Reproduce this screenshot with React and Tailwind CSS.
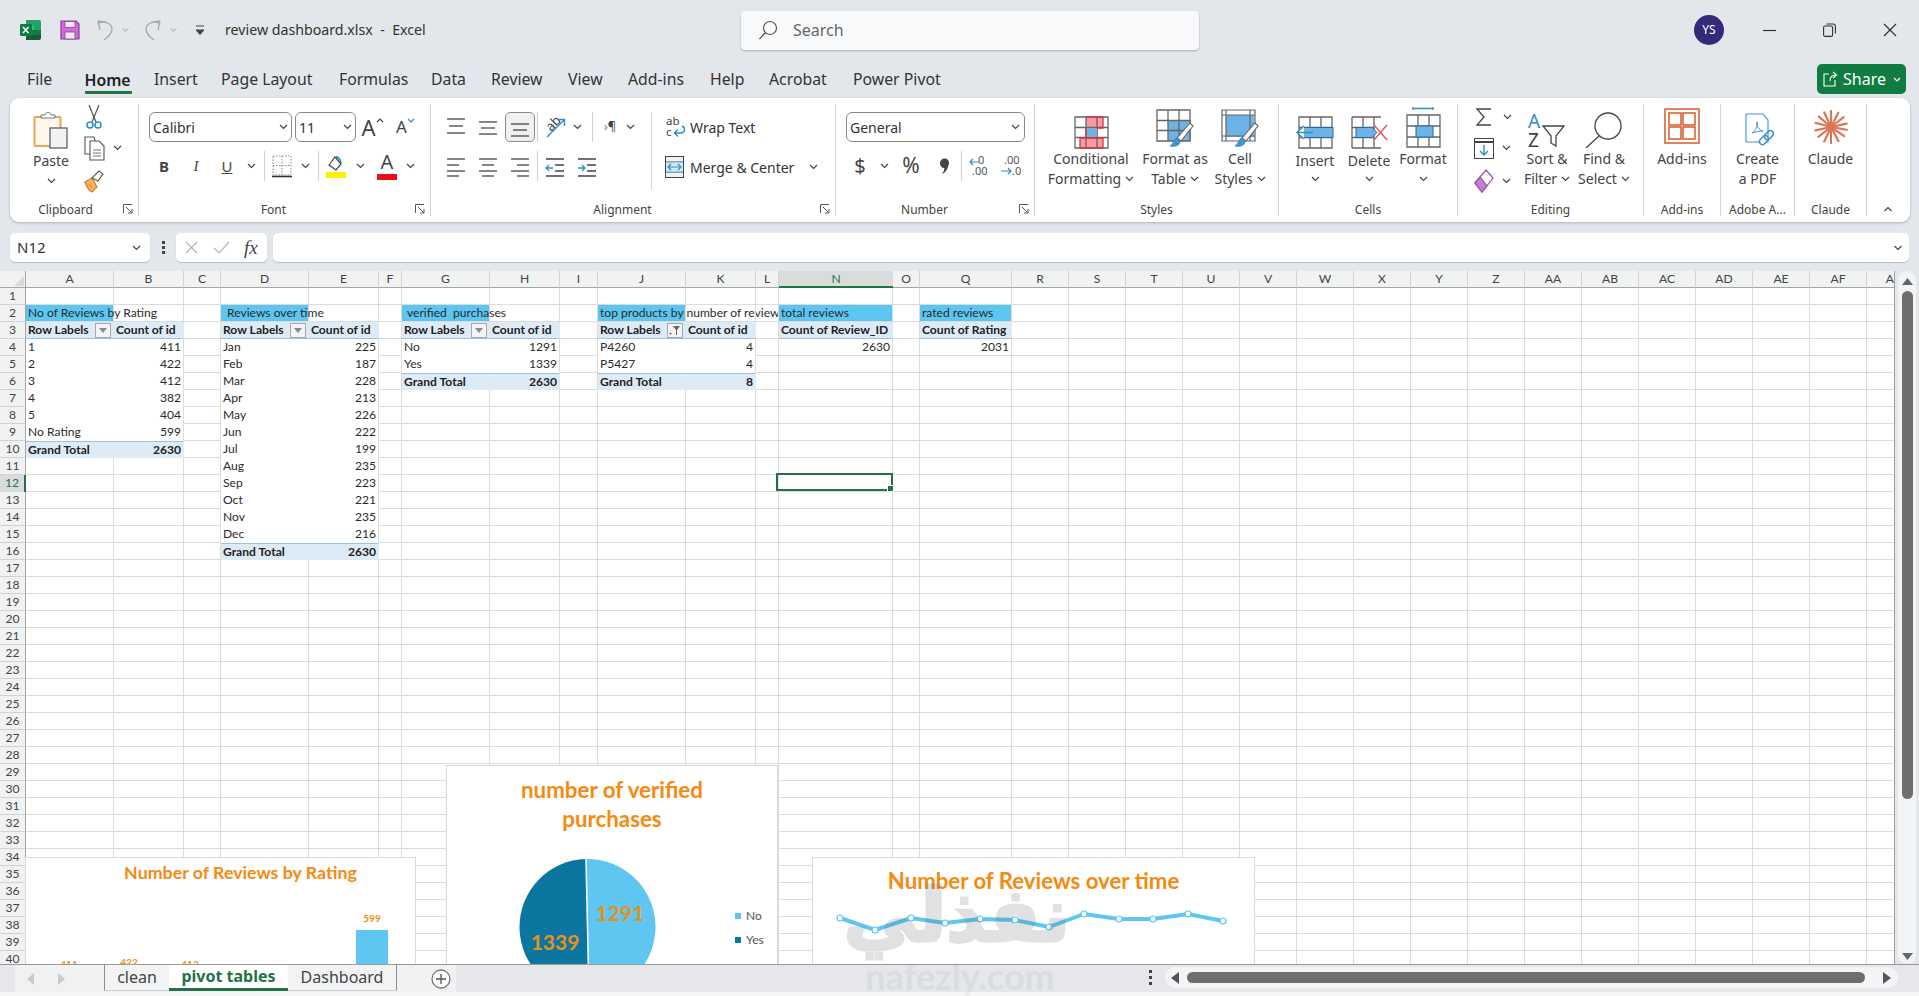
import React from "react";

const Chev = ({ up = false, w = 9 }) => (
  <svg width={w} height="6" viewBox="0 0 9 6" className={up ? "rotate-180" : ""}>
    <path d="M1 1l3.5 3.5L8 1" fill="none" stroke="#444" strokeWidth="1.2" />
  </svg>
);

const Launcher = () => (
  <svg width="10" height="10" viewBox="0 0 10 10" className="absolute right-[5px] top-[0px]">
    <path d="M.5 9V.5H9M3 3l5.5 5.5M5 9h4V5" fill="none" stroke="#555" strokeWidth="1" />
  </svg>
);

const Bars = ({ l, w = 20, h = 22, c = "#444" }) => (
  <svg width={w} height={h} viewBox={`0 0 ${w} ${h}`}>
    {l.map((a, i) => (
      <path key={i} d={`M${a[0]} ${a[2]}H${a[1]}`} stroke={a[3] || c} strokeWidth="1.3" />
    ))}
  </svg>
);

const ExcelIcon = () => (
  <svg width="21" height="20" viewBox="0 0 21 20">
    <path d="M6 0h13a2 2 0 0 1 2 2v3H6z" fill="#21a366" />
    <rect x="6" y="5" width="15" height="5" fill="#33c481" />
    <rect x="13.5" y="5" width="7.5" height="5" fill="#21a366" />
    <rect x="6" y="10" width="15" height="5" fill="#107c41" />
    <path d="M6 15h15v3a2 2 0 0 1-2 2H6z" fill="#185c37" />
    <rect x="0" y="4" width="12" height="12" rx="1.2" fill="#107c41" />
    <path d="M3 7l5.6 6M8.6 7L3 13" stroke="#fff" strokeWidth="1.6" />
  </svg>
);

const SaveIcon = () => (
  <svg width="20" height="20" viewBox="0 0 20 20">
    <path d="M1 1h15l3 3v15H1z" fill="#d36ad9" stroke="#8a3f9c" strokeWidth="1.2" />
    <rect x="5" y="1.5" width="10" height="6" fill="#f6e7f8" stroke="#8a3f9c" strokeWidth=".8" />
    <rect x="5" y="12" width="10" height="7" fill="#f6e7f8" stroke="#8a3f9c" strokeWidth=".8" />
  </svg>
);

const Undo = ({ flip }) => (
  <svg width="19" height="22" viewBox="0 0 19 22" className={flip ? "-scale-x-100" : ""}>
    <path d="M4 11l-2-9M2 2l9 1.5M3 4c5-2 13 0 13 6 0 5-4 8-8 11" fill="none" stroke="#a6a8ab" strokeWidth="1.3" />
  </svg>
);

const Paste = () => (
  <svg width="36" height="38" viewBox="0 0 36 38">
    <rect x="1.5" y="6" width="26" height="29" rx="1" fill="#fdf7ec" stroke="#e6a655" strokeWidth="2" />
    <path d="M8 7V4h4c.5-3.500 5.500-3.500 6 0h4v3H8z" fill="#fff" stroke="#777" strokeWidth="1" />
    <rect x="17" y="17" width="17" height="20" fill="#f2f2f2" stroke="#555" strokeWidth="1.2" />
  </svg>
);

const Cut = () => (
  <svg width="16" height="26" viewBox="0 0 16 26">
    <path d="M3 1l7 17M13 1L6 18" stroke="#555" strokeWidth="1.2" />
    <circle cx="4" cy="21" r="3" fill="#fff" stroke="#2e8fc4" strokeWidth="1.6" />
    <circle cx="12" cy="21" r="3" fill="#fff" stroke="#2e8fc4" strokeWidth="1.6" />
  </svg>
);

const Copy = () => (
  <svg width="21" height="25" viewBox="0 0 21 25">
    <path d="M1 1h9l1 3v14H1z" fill="#fff" stroke="#555" strokeWidth="1.1" />
    <path d="M6 5h9l5 5v14H6z" fill="#fff" stroke="#555" strokeWidth="1.1" />
    <path d="M9 14h8M9 17h8M9 20h8" stroke="#777" strokeWidth="1" />
  </svg>
);

const Painter = () => (
  <svg width="21" height="24" viewBox="0 0 21 24">
    <path d="M1 13l7-4 5 9-5 5C5 22 2 17 1 13z" fill="#f3b264" stroke="#d97c1e" strokeWidth="1.2" />
    <path d="M8 9l7-7 4 3-5 7z" fill="#fff" stroke="#555" strokeWidth="1.1" />
    <path d="M5 15l3 4" stroke="#d97c1e" strokeWidth="1" />
  </svg>
);

const GrowA = ({ small }) => (
  <div className="flex items-start text-[#444]">
    <span className={small ? "text-[17px] leading-[24px]" : "text-[22px] leading-[26px]"}>A</span>
    <svg width="8" height="6" viewBox="0 0 8 6" className={"mt-[3px] " + (small ? "" : "rotate-180")}>
      <path d="M1 1l3 3 3-3" fill="none" stroke={small ? "#2e8fc4" : "#444"} strokeWidth="1.2" />
    </svg>
  </div>
);

const Borders = () => (
  <svg width="20" height="23" viewBox="0 0 20 23">
    <path d="M1 1h18v19H1zM10 1v19M1 10.500h18" fill="none" stroke="#888" strokeWidth="1" strokeDasharray="1.500 1.500" />
    <path d="M0 21.500h20" stroke="#333" strokeWidth="1.6" />
  </svg>
);

const Fill = () => (
  <svg width="20" height="25" viewBox="0 0 20 25">
    <path d="M3 11l6-8 6 7-5 6z" fill="#fff" stroke="#444" strokeWidth="1.2" />
    <path d="M9 4c2-2 5 0 6 5" fill="none" stroke="#1c79a8" strokeWidth="1.6" />
    <rect x="0" y="18" width="20" height="6" fill="#fdf100" />
  </svg>
);

const FontCol = () => (
  <div className="flex flex-col items-center">
    <span className="text-[20px] leading-[20px] text-[#444]">A</span>
    <div className="w-[20px] h-[6px] bg-[#e9101a] mt-[2px]" />
  </div>
);

const Orient = () => (
  <svg width="22" height="24" viewBox="0 0 22 24">
    <text x="4" y="14" fontSize="13" fill="#444" transform="rotate(-45 9 12)" fontFamily="Noto Sans">ab</text>
    <path d="M3 22L20 5M14 4.500h6.500V11" fill="none" stroke="#2e8fc4" strokeWidth="1.400" />
  </svg>
);

const WrapIcon = () => (
  <svg width="22" height="24" viewBox="0 0 22 24">
    <text x="1" y="10" fontSize="11.500" fill="#444" fontFamily="Noto Sans">ab</text>
    <text x="1" y="21" fontSize="11.500" fill="#444" fontFamily="Noto Sans">c</text>
    <path d="M17 11c4 2 3 7-1 7h-6M13 14.500L9.500 18l3.500 3.500" fill="none" stroke="#2e8fc4" strokeWidth="1.400" />
  </svg>
);

const MergeIcon = () => (
  <svg width="20" height="22" viewBox="0 0 20 22">
    <rect x=".5" y=".5" width="18" height="21" fill="#eaf5fb" stroke="#444" />
    <path d="M.5 6h18M.5 16h18" stroke="#444" />
    <rect x="1" y="6.500" width="17" height="9" fill="#cfe8f6" />
    <path d="M3 11h13M6 8l-3 3 3 3M13 8l3 3-3 3" fill="none" stroke="#2e8fc4" strokeWidth="1.200" />
  </svg>
);

const Dec = ({ inc }) => (
  <svg width="22" height="22" viewBox="0 0 22 22" fontFamily="Noto Sans" fontSize="11" fill="#555">
    {inc ? (
      <>
        <text x="10" y="9">0</text>
        <text x="4" y="20">.00</text>
        <path d="M2 6h9M5 3L2 6l3 3" fill="none" stroke="#2e8fc4" strokeWidth="1.200" transform="translate(0,1)" />
      </>
    ) : (
      <>
        <text x="4" y="9">.00</text>
        <text x="12" y="20">.0</text>
        <path d="M1 16h10M8 13l3 3-3 3" fill="none" stroke="#2e8fc4" strokeWidth="1.200" />
      </>
    )}
  </svg>
);

const GridBase = ({ children, w = 35, h = 33 }) => (
  <svg width={w} height={h} viewBox="0 0 35 33">{children}</svg>
);
const lines35 = "M1 1h33v31H1zM1 11.500h33M1 21.500h33M12 1v31M23 1v31";

const CondFmt = () => (
  <GridBase>
    <rect x="12" y="1" width="17" height="11" fill="#f79aa2" />
    <rect x="12" y="11" width="11" height="11" fill="#6eb2e6" />
    <rect x="6" y="22" width="23" height="10" fill="#f79aa2" />
    <path d={lines35} fill="none" stroke="#666" strokeWidth="1.300" />
    <path d="M12 1h17M29 1v11H23v10M12 12v10M6 22v10M6 22h23v10H6" fill="none" stroke="#d8333f" strokeWidth="1.300" />
    <rect x="13" y="12" width="10" height="9" fill="#6eb2e6" />
  </GridBase>
);

const Brush = ({ x = 0, y = 0 }) => (
  <g transform={`translate(${x} ${y})`}>
    <path d="M20 0l3 3-12 15-4-3z" fill="#fff" stroke="#666" strokeWidth="1.100" />
    <path d="M6 15l4 3c0 5-6 6-10 5 3-1 3-5 6-8z" fill="#3f97d3" stroke="#2a7fb8" strokeWidth=".8" />
  </g>
);

const FmtTable = () => (
  <svg width="38" height="40" viewBox="0 0 38 40">
    <rect x="12" y="11" width="23" height="21" fill="#6eb2e6" />
    <path d={lines35} fill="none" stroke="#666" strokeWidth="1.300" />
    <Brush x="14" y="14" />
  </svg>
);

const CellStyles = () => (
  <svg width="38" height="40" viewBox="0 0 38 40">
    <rect x="5" y="6" width="28" height="22" fill="#6eb2e6" />
    <path d="M1 1h33v31H1zM1 6h33M1 27h33M5 1v31M29 1v31" fill="none" stroke="#666" strokeWidth="1.200" />
    <Brush x="14" y="14" />
  </svg>
);

const InsertIc = () => (
  <svg width="40" height="33" viewBox="0 0 40 33">
    <path d="M4 1h33v31H4zM4 11.500h33M4 21.500h33M15 1v31M26 1v31" fill="none" stroke="#666" strokeWidth="1.300" />
    <rect x="8" y="11.500" width="30" height="10" fill="#6eb2e6" stroke="#1c6fa8" strokeWidth="1" />
    <path d="M18 16.500H2M9 10l-7 6.500L9 23" fill="#fff" stroke="#2e8fc4" strokeWidth="1.400" />
  </svg>
);

const DeleteIc = () => (
  <svg width="37" height="33" viewBox="0 0 37 33">
    <path d="M1 1h29M1 32h29M1 1v31M12 1v31M23 1v31M1 11.500h22M1 21.500h22" fill="none" stroke="#666" strokeWidth="1.300" />
    <path d="M5 11.500h16v-0l5 5-5 5H5z" fill="#6eb2e6" stroke="#1c6fa8" strokeWidth="1" />
    <path d="M23 9l13 15M36 9L23 24" stroke="#e2504f" strokeWidth="1.300" />
  </svg>
);

const FormatIc = () => (
  <svg width="35" height="42" viewBox="0 0 35 42">
    <path d="M7 1.500h20M7 0v3M27 0v3" stroke="#2e8fc4" strokeWidth="1.300" />
    <path d="M1 8h33v32H1zM1 19h33M1 30h33M12 8v32M23 8v32" fill="none" stroke="#666" strokeWidth="1.300" />
    <rect x="10" y="19" width="17" height="11" fill="#6eb2e6" stroke="#1c6fa8" strokeWidth="1" />
  </svg>
);

const SortIc = () => (
  <svg width="40" height="36" viewBox="0 0 40 36" fontFamily="Noto Sans" fontSize="19">
    <text x="1" y="15" fill="#2e8fc4">A</text>
    <text x="1" y="34" fill="#444">Z</text>
    <path d="M16 13h21L29 23v10l-5-3v-7z" fill="#fff" stroke="#444" strokeWidth="1.300" />
  </svg>
);

const FindIc = () => (
  <svg width="38" height="37" viewBox="0 0 38 37">
    <circle cx="23" cy="14" r="13" fill="#fff" stroke="#444" strokeWidth="1.300" />
    <path d="M14 24L1 36" stroke="#444" strokeWidth="1.300" />
  </svg>
);

const Addins = () => (
  <svg width="36" height="36" viewBox="0 0 36 36" fill="none" stroke="#d9643a" strokeWidth="1.600">
    <rect x="1" y="1" width="34" height="34" />
    <rect x="5" y="5" width="12" height="12" />
    <rect x="19" y="5" width="12" height="12" />
    <rect x="5" y="19" width="12" height="12" />
    <rect x="19" y="19" width="12" height="12" />
  </svg>
);

const PdfIc = () => (
  <svg width="33" height="36" viewBox="0 0 33 36">
    <path d="M2 1h17l5 6v22H2z" fill="#fff" stroke="#3f8fd8" strokeWidth="1.100" />
    <path d="M8 20c4-2 6-8 5-11-1 4 2 8 6 9-4 0-8 1-11 2z" fill="none" stroke="#3f8fd8" strokeWidth="1" />
    <g transform="rotate(-45 22 25)" fill="none" stroke="#3f8fd8" strokeWidth="1.500">
      <rect x="14" y="22" width="10" height="6" rx="3" fill="#fff" />
      <rect x="21" y="22" width="10" height="6" rx="3" />
    </g>
  </svg>
);

const ClaudeIc = () => {
  const a = [0, 27, 52, 78, 100, 125, 152, 180, 205, 232, 258, 285, 310, 335];
  return (
    <svg width="34" height="34" viewBox="-17 -17 34 34">
      {a.map((d, i) => (
        <path key={i} d="M0 0V-16" transform={`rotate(${d})`} stroke="#d97757" strokeWidth="2.200" strokeLinecap="round" />
      ))}
    </svg>
  );
};

const S = ({ w, children, className = "" }) => (
  <div className={"flex items-center justify-center h-full shrink-0 " + className} style={{ width: w }}>{children}</div>
);
const Sep = () => <div className="w-[1px] h-[30px] bg-[#d0d0d0] shrink-0" />;

const Group = ({ w, label, pr = 0, launcher, last, children }) => (
  <div className={"flex flex-col h-[112px] mt-[6px] shrink-0 " + (last ? "" : "border-r border-[#d4d4d4]")} style={{ width: w }}>
    <div className="h-[100px] flex">{children}</div>
    <div className="relative h-[12px] flex justify-center text-[12px] leading-[12px] text-[#444] whitespace-nowrap" style={{ paddingRight: pr }}>
      {label}
      {launcher && <Launcher />}
    </div>
  </div>
);

const Big = ({ w, icon, l1, l2, chev, ih = 41, pt = "pt-[4px]", t1 = "" }) => (
  <div className={"flex flex-col items-center shrink-0 whitespace-nowrap text-[#444] text-[14px] leading-[20px] " + pt} style={{ width: w }}>
    <div className="flex items-end justify-center" style={{ height: ih }}>{icon}</div>
    <div className={t1}>{l1}</div>
    <div className="h-[20px] flex items-center gap-[4px]">
      {l2}
      {chev && <Chev />}
    </div>
  </div>
);

const Three = ({ children }) => <div className="flex flex-col shrink-0">{children}</div>;

function Ribbon() {
  return (
    <div className="ml-[10px] w-[1900px] h-[124px] bg-white rounded-[9px] shadow-[0_1px_3px_rgba(0,0,0,0.22)] flex">
      <Group w={129} label="Clipboard" pr={17} launcher>
        <div className="pl-[9px] flex">
          <Big w={64} icon={<Paste />} l1="Paste" l2="" chev t1="mt-[2px]" />
        </div>
        <Three>
          <div className="h-[26px] flex">
            <S w={22}><Cut /></S>
          </div>
          <div className="h-[36px] flex">
            <S w={22}><Copy /></S>
            <S w={24}><Chev /></S>
          </div>
          <div className="h-[30px] flex">
            <S w={22}><Painter /></S>
          </div>
        </Three>
      </Group>

      <Group w={292} label="Font" pr={22} launcher>
        <div className="flex flex-col pl-[10px] pt-[8px]">
          <div className="flex h-[30px] items-center">
            <div className="w-[143px] h-[30px] border border-[#8a8a8a] rounded-[6px] flex items-center justify-between pl-[3px] pr-[3px] text-[14px] text-[#333]">
              Calibri <Chev />
            </div>
            <div className="ml-[3px] w-[61px] h-[30px] border border-[#8a8a8a] rounded-[6px] flex items-center justify-between pl-[3px] pr-[3px] text-[14px] text-[#333]">
              11 <Chev />
            </div>
            <S w={33}><GrowA /></S>
            <S w={33}><GrowA small /></S>
          </div>
          <div className="flex h-[30px] mt-[9px] items-center text-[#444] text-[15px]">
            <S w={30}><span className="font-bold">B</span></S>
            <S w={34}><span className="italic font-['Liberation_Serif',serif]">I</span></S>
            <S w={28}><span className="underline">U</span></S>
            <S w={20}><Chev /></S>
            <S w={7}><Sep /></S>
            <S w={27}><Borders /></S>
            <S w={20}><Chev /></S>
            <S w={7}><Sep /></S>
            <S w={27}><Fill /></S>
            <S w={22}><Chev /></S>
            <S w={32}><FontCol /></S>
            <S w={14}><Chev /></S>
          </div>
        </div>
      </Group>

      <Group w={405} label="Alignment" pr={21} launcher>
        <div className="w-[220px] flex flex-col pl-[9px] pt-[8px]">
          <div className="flex h-[30px] items-center">
            <S w={32}><Bars l={[[1, 19, 3], [3, 17, 10], [1, 19, 17]]} /></S>
            <S w={32}><Bars l={[[1, 19, 6], [3, 17, 12], [1, 19, 18]]} /></S>
            <S w={32}>
              <div className="w-[30px] h-[30px] bg-[#f0f0f0] border border-[#8a8a8a] rounded-[5px] flex items-center justify-center">
                <Bars l={[[1, 19, 8], [3, 17, 14], [1, 19, 20]]} />
              </div>
            </S>
            <S w={2}><Sep /></S>
            <S w={34}><Orient /></S>
            <S w={11}><Chev /></S>
            <S w={18}><Sep /></S>
            <S w={18}>
              <span className="text-[13px] text-[#444]"><span className="text-[#2e8fc4]">›</span>¶</span>
            </S>
            <S w={23}><Chev /></S>
          </div>
          <div className="flex h-[30px] mt-[9px] items-center">
            <S w={32}><Bars l={[[1, 19, 4], [1, 13, 10], [1, 19, 16], [1, 13, 21]]} /></S>
            <S w={32}><Bars l={[[1, 19, 4], [4, 16, 10], [1, 19, 16], [4, 16, 21]]} /></S>
            <S w={32}><Bars l={[[1, 19, 4], [7, 19, 10], [1, 19, 16], [7, 19, 21]]} /></S>
            <S w={2}><Sep /></S>
            <S w={34}>
              <svg width="20" height="22" viewBox="0 0 20 22"><path d="M1 4h18M10 10h9M10 16h9M1 21h18" stroke="#444" strokeWidth="1.300" /><path d="M8 13H1M4 10l-3 3 3 3" fill="none" stroke="#2e8fc4" strokeWidth="1.300" /></svg>
            </S>
            <S w={30}>
              <svg width="20" height="22" viewBox="0 0 20 22"><path d="M1 4h18M10 10h9M10 16h9M1 21h18" stroke="#444" strokeWidth="1.300" /><path d="M1 13h7M5 10l3 3-3 3" fill="none" stroke="#2e8fc4" strokeWidth="1.300" /></svg>
            </S>
          </div>
        </div>
        <div className="w-[1px] h-[77px] mt-[8px] bg-[#d4d4d4] shrink-0" />
        <div className="flex flex-col pt-[8px] text-[14px] text-[#333] whitespace-nowrap">
          <div className="flex h-[30px] items-center">
            <div className="w-[38px] flex justify-end pr-[3px]"><WrapIcon /></div>
            Wrap Text
          </div>
          <div className="flex h-[30px] mt-[10px] items-center">
            <div className="w-[38px] flex justify-end pr-[5px]"><MergeIcon /></div>
            Merge &amp; Center
            <span className="ml-[15px]"><Chev /></span>
          </div>
        </div>
      </Group>

      <Group w={199} label="Number" pr={21} launcher>
        <div className="flex flex-col pl-[10px] pt-[8px]">
          <div className="w-[179px] h-[30px] border border-[#8a8a8a] rounded-[6px] flex items-center justify-between pl-[3px] pr-[4px] text-[14px] text-[#333]">
            General <Chev />
          </div>
          <div className="flex h-[30px] mt-[9px] items-center text-[#444]">
            <S w={28}><span className="text-[20px]">$</span></S>
            <S w={20}><Chev /></S>
            <S w={34}><span className="text-[21px]">%</span></S>
            <S w={32}>
              <svg width="10" height="17" viewBox="0 0 10 17"><path d="M1 5a4.500 4.500 0 1 1 8.500 2c-.8 4-3 7.500-6.500 9.500 1.500-2.500 2.500-4.500 2.300-6.500A4.500 4.500 0 0 1 1 5z" fill="#444" /></svg>
            </S>
            <S w={2}><Sep /></S>
            <S w={34}><Dec inc /></S>
            <S w={29}><Dec /></S>
          </div>
        </div>
      </Group>

      <Group w={244} label="Styles">
        <div className="pl-[15px] flex">
          <Big w={82} pt="pt-[8px]" ih={37} icon={<CondFmt />} l1="Conditional" l2="Formatting" chev />
          <Big w={86} pt="pt-[8px]" ih={37} icon={<FmtTable />} l1="Format as" l2="Table" chev />
          <Big w={44} pt="pt-[8px]" ih={37} icon={<CellStyles />} l1="Cell" l2="Styles" chev />
        </div>
      </Group>

      <Group w={179} label="Cells">
        <div className="pl-[9px] flex">
          <Big w={54} pt="pt-[8px]" ih={37} icon={<InsertIc />} l1="Insert" l2="" chev t1="mt-[2px] -mb-[2px]" />
          <Big w={54} pt="pt-[8px]" ih={37} icon={<DeleteIc />} l1="Delete" l2="" chev t1="mt-[2px] -mb-[2px]" />
          <Big w={54} pt="pt-[0px]" ih={45} icon={<FormatIc />} l1="Format" l2="" chev />
        </div>
      </Group>

      <Group w={186} label="Editing">
        <div className="pl-[14px] flex">
          <Three>
            <div className="h-[26px] flex">
              <S w={24}>
                <svg width="16" height="18" viewBox="0 0 16 18"><path d="M15 1H1l7 8-7 8h14" fill="none" stroke="#444" strokeWidth="1.300" /></svg>
              </S>
              <S w={22}><Chev /></S>
            </div>
            <div className="h-[36px] flex">
              <S w={24}>
                <svg width="20" height="21" viewBox="0 0 20 21">
                  <rect x=".5" y=".5" width="19" height="20" fill="#fff" stroke="#444" />
                  <path d="M.5 4h19" stroke="#444" strokeWidth="2" />
                  <path d="M10 7v10M6 13l4 4 4-4" fill="none" stroke="#2e8fc4" strokeWidth="1.400" />
                </svg>
              </S>
              <S w={20}><Chev /></S>
            </div>
            <div className="h-[30px] flex">
              <S w={24}>
                <svg width="20" height="24" viewBox="0 0 20 24">
                  <path d="M1 14L12 1l7 8L8 23z" fill="#fff" stroke="#9a4fb0" strokeWidth="1.200" />
                  <path d="M1 14l5-6 7 9-5 6z" fill="#c27ed6" stroke="#9a4fb0" strokeWidth="1.200" />
                </svg>
              </S>
              <S w={20}><Chev /></S>
            </div>
          </Three>
          <Big w={58} icon={<SortIc />} l1="Sort &" l2="Filter" chev />
          <Big w={56} icon={<FindIc />} l1="Find &" l2="Select" chev />
        </div>
      </Group>

      <Group w={77} label="Add-ins">
        <Big w={76} icon={<div className="pb-[5px]"><Addins /></div>} l1="Add-ins" l2="" />
      </Group>
      <Group w={74} label="Adobe A...">
        <Big w={73} icon={<div className="pl-[6px]"><PdfIc /></div>} l1="Create" l2="a PDF" />
      </Group>
      <Group w={72} label="Claude">
        <Big w={71} icon={<div className="pb-[5px]"><ClaudeIc /></div>} l1="Claude" l2="" />
      </Group>
      <div className="flex-1 relative">
        <div className="absolute left-[15px] top-[108px]"><Chev up w={12} /></div>
      </div>
    </div>
  );
}

/* ---------- spreadsheet ---------- */
const letters = ["A","B","C","D","E","F","G","H","I","J","K","L","N","O","Q","R","S","T","U","V","W","X","Y","Z","AA","AB","AC","AD","AE","AF","AG"];
const data = {};
const put = (c, r, t, kind, extra) => { data[c + ":" + r] = { t, kind, ...extra }; };

function pivot(a, b, rows, total) {
  put(a, 3, "Row Labels", "hL", { btn: a === "J" ? "filter" : "drop" });
  put(b, 3, "Count of id", "hR");
  rows.forEach(([l, v], i) => {
    put(a, 4 + i, l, "dL");
    put(b, 4 + i, v, "dR");
  });
  const tr = 4 + rows.length;
  put(a, tr, "Grand Total", "tL");
  put(b, tr, total, "tR");
}
put("A", 2, "No of Reviews by Rating", "title");
put("D", 2, "Reviews over time", "title", { pad: "pl-[6px]" });
put("G", 2, "verified  purchases", "title", { pad: "pl-[5px]" });
put("J", 2, "top products by number of reviews", "title");
put("N", 2, "total reviews", "title");
put("Q", 2, "rated reviews", "title");
pivot("A", "B", [["1",411],["2",422],["3",412],["4",382],["5",404],["No Rating",599]], 2630);
pivot("D", "E", [["Jan",225],["Feb",187],["Mar",228],["Apr",213],["May",226],["Jun",222],["Jul",199],["Aug",235],["Sep",223],["Oct",221],["Nov",235],["Dec",216]], 2630);
pivot("G", "H", [["No",1291],["Yes",1339]], 2630);
pivot("J", "K", [["P4260",4],["P5427",4]], 8);
put("N", 3, "Count of Review_ID", "hS");
put("N", 4, 2630, "num");
put("Q", 3, "Count of Rating", "hS");
put("Q", 4, 2031, "num");

const kinds = {
  title: "bg-[#5cc5f0] border-[#5cc5f0]",
  hL: "bg-[#ddebf7] border-r-[#ddebf7] border-b-[#9bc2e6] font-bold text-[#222]",
  hR: "bg-[#ddebf7] border-r-[#ddebf7] border-b-[#9bc2e6] font-bold text-[#222]",
  hS: "bg-[#ddebf7] border-r-[#ddebf7] border-b-[#9bc2e6] font-bold text-[#222]",
  dL: "border-r-white border-b-white",
  dR: "text-right border-b-white",
  tL: "bg-[#ddebf7] border-[#ddebf7] border-t border-t-[#9bc2e6] font-bold text-[#222]",
  tR: "bg-[#ddebf7] border-[#ddebf7] border-t border-t-[#9bc2e6] font-bold text-[#222] text-right",
  num: "text-right",
};

const FilterBtn = ({ kind }) => (
  <span className="w-[16px] h-[15px] bg-[#f4f4f4] border border-[#a8a8a8] flex items-center justify-center shrink-0">
    {kind === "filter" ? (
      <svg width="12" height="11" viewBox="0 0 12 11"><path d="M4 1h7L8 5v5H7V5z" fill="#666" /><path d="M0 8h3L1.500 10z" fill="#666" /></svg>
    ) : (
      <svg width="8" height="5" viewBox="0 0 8 5"><path d="M0 0h8L4 5z" fill="#8a8a8a" /></svg>
    )}
  </span>
);

const Cell = ({ c, r }) => {
  const d = data[c + ":" + r];
  const sel = c === "N" && r === 12;
  if (!d) {
    return (
      <div className="relative border-r border-b border-[#dcdcdc]">
        {sel && (
          <div className="absolute -left-[3px] -top-[2px] -right-[1px] bottom-0 border-2 border-[#217346] z-10">
            <div className="absolute -right-[3px] -bottom-[3px] w-[5px] h-[5px] bg-[#217346] border border-white box-content" />
          </div>
        )}
      </div>
    );
  }
  return (
    <div className={"border-r border-b border-[#dcdcdc] whitespace-pre leading-[16px] text-[#2b2b2b] " + kinds[d.kind] + " " + (d.pad || "pl-[2px] pr-[2px]") + (d.btn ? " flex items-center justify-between pr-[1px]" : "")}>
      {d.t}
      {d.btn && <FilterBtn kind={d.btn} />}
    </div>
  );
};

function Sheet() {
  const rows = Array.from({ length: 40 }, (_, i) => i + 1);
  return (
    <div className="relative w-[1895px] h-[693px] overflow-hidden bg-white border-r border-[#a0a0a0] shrink-0 font-['Lato',sans-serif] text-[12.1px]">
      <div className="grid grid-cols-[26px_88px_70px_37px_88px_70px_23px_88px_70px_38px_88px_70px_23px_114px_27px_92px_repeat(15,57px)_29px] auto-rows-[17px]">
        <div className="bg-[#f1f2f2] border-r border-b border-[#a5a5a5] flex items-end justify-end">
          <svg width="10" height="10" viewBox="0 0 10 10" className="mr-[1px] mb-[1px]"><path d="M10 0v10H0z" fill="#d8d8d8" /></svg>
        </div>
        {letters.map((l, i) =>
          l === "N" ? (
            <div key={l} className="bg-[#d9dcda] border-b-2 border-[#217346] text-[#217346] text-center leading-[16px] overflow-hidden">{l}</div>
          ) : (
            <div key={l} className={"bg-[#f1f2f2] border-r border-r-[#d2d2d2] border-b border-b-[#a5a5a5] text-[#444] leading-[16px] overflow-hidden " + (i === letters.length - 1 ? "text-right pr-[1px]" : "text-center")}>{i === letters.length - 1 ? "A" : l}</div>
          )
        )}
        {rows.map((r) => (
          <React.Fragment key={r}>
            {r === 12 ? (
              <div className="bg-[#d9dcda] border-r-2 border-[#217346] border-b-0 text-[#217346] text-center leading-[16px]">{r}</div>
            ) : (
              <div className="bg-[#f1f2f2] border-r border-r-[#a5a5a5] border-b border-b-[#d2d2d2] text-[#444] text-center leading-[16px]">{r}</div>
            )}
            {letters.map((k) => (
              <Cell key={k} c={k} r={r} />
            ))}
          </React.Fragment>
        ))}
      </div>

      {/* chart 1 */}
      <div className="absolute left-[25px] top-[586px] w-[391px] h-[200px] bg-white border border-[#d9d9d9]">
        <div className="text-center text-[#f58a0f] font-bold text-[17.800px] leading-[20px] pt-[4px] pl-[40px]">Number of Reviews by Rating</div>
        <svg width="389" height="180" viewBox="0 0 389 180" className="absolute left-0 top-0" fontFamily="Lato" fontWeight="700" fontSize="10" fill="#f58a0f" textAnchor="middle">
          <rect x="330" y="72" width="32" height="100" fill="#5fc6f2" />
          <text x="346" y="64">599</text>
          <text x="43" y="110">411</text>
          <text x="103" y="108">422</text>
          <text x="164" y="110">412</text>
        </svg>
      </div>

      {/* chart 2 */}
      <div className="absolute left-[446px] top-[494px] w-[332px] h-[300px] bg-white border border-[#d9d9d9]">
        <div className="text-center text-[#f58a0f] font-bold text-[22.300px] leading-[29px] pt-[9px]">number of verified<br />purchases</div>
        <svg width="330" height="210" viewBox="0 0 330 210" className="absolute left-0 top-0" fontFamily="Lato">
          <path d="M139 93A68 68 0 0 1 142 229L139 93z" fill="#5fc6f2" />
          <path d="M139 93A68 68 0 0 0 142 229L139 93z" fill="#0b76a0" />
          <path d="M139 93L142 229" stroke="#fff" strokeWidth="1.500" />
          <text x="173" y="155" fontSize="21" fontWeight="700" fill="#e8901a" textAnchor="middle">1291</text>
          <text x="108" y="184" fontSize="21" fontWeight="700" fill="#e8901a" textAnchor="middle">1339</text>
          <rect x="288" y="147" width="6" height="6" fill="#5fc6f2" />
          <text x="299" y="154" fontSize="12" fill="#555">No</text>
          <rect x="288" y="171" width="6" height="6" fill="#0b76a0" />
          <text x="299" y="178" fontSize="12" fill="#555">Yes</text>
        </svg>
      </div>

      {/* chart 3 */}
      <div className="absolute left-[812px] top-[586px] w-[443px] h-[200px] bg-white border border-[#d9d9d9]">
        <div className="text-center text-[#f58a0f] font-bold text-[22.200px] leading-[26px] pt-[10px]">Number of Reviews over time</div>
        <svg width="441" height="100" viewBox="0 0 441 100" className="absolute left-0 top-0">
          {(() => {
            const p = [[27,60],[62,72],[98,60],[132,65],[167,61],[202,62],[236,69],[271,56],[306,61],[340,61],[375,56],[410,63]];
            return (
              <>
                <polyline points={p.map((a) => a.join(",")).join(" ")} fill="none" stroke="#5fc6f2" strokeWidth="4" />
                {p.map((a, i) => (
                  <circle key={i} cx={a[0]} cy={a[1]} r="3" fill="#fff" stroke="#5fc6f2" strokeWidth="1.200" />
                ))}
              </>
            );
          })()}
        </svg>
      </div>
    </div>
  );
}

const VScroll = () => (
  <div className="ml-[3px] w-[18px] h-[693px] rounded-[9px] bg-[#f3f4f5] flex flex-col items-center pt-[7px] pb-[4px]">
    <svg width="11" height="7" viewBox="0 0 11 7"><path d="M5.500 0L11 7H0z" fill="#666" /></svg>
    <div className="mt-[6px] w-[11px] h-[508px] rounded-[6px] bg-[#6e6e6e]" />
    <div className="flex-1" />
    <svg width="11" height="7" viewBox="0 0 11 7"><path d="M5.500 7L11 0H0z" fill="#666" /></svg>
  </div>
);

const Tab = ({ w, active, children, cls = "" }) => (
  <div
    className={
      "h-[26px] flex items-center justify-center shrink-0 text-[16px] leading-[22px] pb-[2px] " +
      (active ? "bg-white text-[#217346] font-bold border-b-[3px] border-[#217346] " : "bg-[#f2f3f4] text-[#444] border-b border-[#cfd2d5] ") + cls
    }
    style={{ width: w }}
  >
    {children}
  </div>
);

function BottomBar() {
  return (
    <div className="h-[28px] border-t border-[#9a9a9a] flex items-start bg-[#e5e7ea] relative">
      <div className="w-[15px] shrink-0" />
      <div className="flex w-[441px] h-[27px] bg-[#f0f1f2] shrink-0">
        <div className="w-[89px] flex items-center shrink-0">
          <svg width="8" height="12" viewBox="0 0 8 12" className="ml-[12px]"><path d="M7 0v12L0 6z" fill="#c8cacc" /></svg>
          <svg width="8" height="12" viewBox="0 0 8 12" className="ml-[22px]"><path d="M1 0v12l7-6z" fill="#c8cacc" /></svg>
        </div>
        <Tab w={65} cls="border-l border-l-[#8e8e8e]">clean</Tab>
        <Tab w={119} active>pivot tables</Tab>
        <Tab w={109} cls="border-r border-r-[#8e8e8e]">Dashboard</Tab>
        <div className="flex-1 flex items-center justify-end pr-[5px]">
          <svg width="20" height="20" viewBox="0 0 20 20"><circle cx="10" cy="10" r="9" fill="#fff" stroke="#777" strokeWidth="1.300" /><path d="M10 5v10M5 10h10" stroke="#555" strokeWidth="1.300" /></svg>
        </div>
      </div>
      <div className="w-[685px] shrink-0" />
      <div className="flex flex-col gap-[3px] w-[18px] items-center pt-[5px] shrink-0">
        <i className="w-[3px] h-[3px] bg-[#444]" />
        <i className="w-[3px] h-[3px] bg-[#444]" />
        <i className="w-[3px] h-[3px] bg-[#444]" />
      </div>
      <div className="ml-[6px] mt-[2px] w-[733px] h-[21px] rounded-[10px] bg-[#f3f4f5] flex items-center">
        <svg width="8" height="12" viewBox="0 0 8 12" className="ml-[6px]"><path d="M8 0v12L0 6z" fill="#555" /></svg>
        <div className="ml-[8px] w-[678px] h-[11px] rounded-[6px] bg-[#6e6e6e]" />
        <svg width="8" height="12" viewBox="0 0 8 12" className="ml-[18px]"><path d="M0 0v12l8-6z" fill="#555" /></svg>
      </div>
    </div>
  );
}

const tabs = [["File",57],["Insert",67],["Page Layout",118],["Formulas",92],["Data",60],["Review",77],["View",60],["Add-ins",82],["Help",59],["Acrobat",84],["Power Pivot",110]];

export default function App() {
  return (
    <div className="relative w-[1919px] h-[996px] overflow-hidden bg-[#e3e6ea] font-['Noto_Sans',sans-serif] text-[#333]">
      {/* title bar */}
      <div className="h-[60px] flex items-center pl-[20px] text-[#333]">
        <ExcelIcon />
        <div className="ml-[19px]"><SaveIcon /></div>
        <div className="ml-[16px]"><Undo /></div>
        <div className="ml-[7px] opacity-50"><Chev w={7} /></div>
        <div className="ml-[14px]"><Undo flip /></div>
        <div className="ml-[8px] opacity-50"><Chev w={7} /></div>
        <svg width="10" height="11" viewBox="0 0 10 11" className="ml-[18px]"><path d="M1 1h8M1 5h8L5 9.500z" fill="#444" stroke="#444" strokeWidth="1" /></svg>
        <div className="ml-[20px] w-[516px] text-[14.200px] whitespace-pre">review dashboard.xlsx  -  Excel</div>
        <div className="w-[458px] h-[39px] rounded-[4px] bg-[#f8f9fa] shadow-[0_1px_2px_rgba(0,0,0,0.25)] flex items-center pl-[17px]">
          <svg width="20" height="20" viewBox="0 0 20 20"><circle cx="12" cy="8" r="6.500" fill="none" stroke="#555" strokeWidth="1.200" /><path d="M7.500 12.500L1.500 19" stroke="#555" strokeWidth="1.200" /></svg>
          <span className="ml-[15px] text-[16px] text-[#666]">Search</span>
        </div>
        <div className="ml-[495px] w-[30px] h-[30px] rounded-full bg-[#35297a] text-white text-[12px] flex items-center justify-center">YS</div>
        <div className="ml-[39px]"><svg width="13" height="13" viewBox="0 0 13 13"><path d="M0 6.500h13" stroke="#333" strokeWidth="1.200" /></svg></div>
        <div className="ml-[47px]"><svg width="13" height="14" viewBox="0 0 13 14"><rect x=".6" y="3" width="9" height="10.400" rx="1.500" fill="none" stroke="#333" strokeWidth="1.100" /><path d="M3.500 1h6.500a2.400 2.400 0 0 1 2.400 2.400v7" fill="none" stroke="#333" strokeWidth="1.100" /></svg></div>
        <div className="ml-[47px]"><svg width="14" height="14" viewBox="0 0 14 14"><path d="M1 1l12 12M13 1L1 13" stroke="#333" strokeWidth="1.200" /></svg></div>
      </div>

      {/* tabs */}
      <div className="h-[38px] pt-[2px] flex items-center pl-[27px] text-[15.800px] text-[#333]">
        <div className="w-[57.500px] shrink-0">File</div>
        <div className="w-[47px] h-[28px] mr-[22.500px] shrink-0 border-b-[3px] border-[#217346] rounded-b-[1px] leading-[28px] font-semibold text-[#222]">Home</div>
        {tabs.slice(1).map(([t, w]) => (
          <div key={t} className="shrink-0 whitespace-nowrap" style={{ width: w }}>{t}</div>
        ))}
        <div className="ml-auto mr-[13px] mb-[2px] w-[89px] h-[30px] rounded-[5px] bg-[#107c41] text-white text-[16px] flex items-center pl-[6px]">
          <svg width="15" height="16" viewBox="0 0 15 16"><path d="M6 3H1v12h11V9M7 10c0-4 2-6 6-6M10 1l3.500 3L10 7" fill="none" stroke="#fff" strokeWidth="1.100" /></svg>
          <span className="ml-[5px]">Share</span>
          <svg width="8" height="5" viewBox="0 0 8 5" className="ml-[7px]"><path d="M1 1l3 3 3-3" fill="none" stroke="#fff" strokeWidth="1.100" /></svg>
        </div>
      </div>

      <Ribbon />

      {/* formula bar */}
      <div className="mt-[11px] h-[29px] flex pl-[10px] text-[#333]">
        <div className="w-[140px] bg-white rounded-[5px] shadow-[0_1px_1px_rgba(0,0,0,0.18)] flex items-center justify-between pl-[7px] pr-[8px] text-[15px]">
          N12 <Chev w={11} />
        </div>
        <div className="w-[26px] flex flex-col items-center justify-center gap-[2px]">
          <i className="w-[3px] h-[3px] bg-[#444]" /><i className="w-[3px] h-[3px] bg-[#444]" /><i className="w-[3px] h-[3px] bg-[#444]" />
        </div>
        <div className="w-[91px] bg-white rounded-[5px] shadow-[0_1px_1px_rgba(0,0,0,0.18)] flex items-center pl-[8px] gap-[14px]">
          <svg width="15" height="15" viewBox="0 0 15 15"><path d="M2 2l11 11M13 2L2 13" stroke="#b5b5b5" strokeWidth="1.200" /></svg>
          <svg width="17" height="15" viewBox="0 0 17 15"><path d="M1 8l5 5L16 2" fill="none" stroke="#b5b5b5" strokeWidth="1.200" /></svg>
          <span className="font-['Liberation_Serif',serif] italic text-[19px] leading-[20px] text-[#444]">fx</span>
        </div>
        <div className="ml-[6px] w-[1636px] bg-white rounded-[5px] shadow-[0_1px_1px_rgba(0,0,0,0.18)] flex items-center justify-end pr-[5px]">
          <Chev w={12} />
        </div>
      </div>

      {/* sheet */}
      <div className="mt-[9px] flex">
        <Sheet />
        <VScroll />
      </div>

      <BottomBar />
      <div className="h-[4px] bg-[#f5f6f7]" />

      {/* watermark */}
      <div dir="rtl" className="absolute left-[848px] top-[872px] w-[222px] text-center pointer-events-none font-['DejaVu_Sans',sans-serif] font-bold text-[74px] leading-[86px] text-[#5a646e] opacity-[0.19] [-webkit-text-stroke:3px_#5a646e] whitespace-nowrap">نفذلي</div>
      <div className="absolute left-[860px] top-[956px] w-[200px] text-center pointer-events-none font-['Lato',sans-serif] font-bold text-[36px] leading-[40px] text-[#5a646e] opacity-[0.07] whitespace-nowrap">nafezly.com</div>
    </div>
  );
}
